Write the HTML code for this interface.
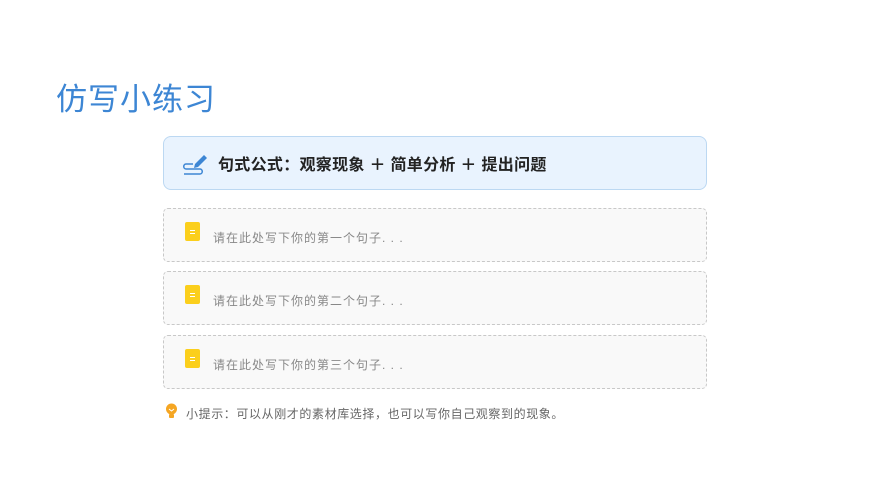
<!DOCTYPE html><html><head><meta charset="utf-8"><style>
body{margin:0;width:870px;height:489px;background:#fff;position:relative;font-family:"Liberation Sans","Noto Sans CJK SC",sans-serif;overflow:hidden}
.t{position:absolute;left:56px;top:74px;font-size:31px;color:#3d86d4;letter-spacing:1px}
.f{position:absolute;left:163px;top:136px;width:542px;height:52px;background:#e9f3fe;border:1px solid #bcd8f2;border-radius:8px}
.f span{position:absolute;left:54px;top:14px;font-size:16px;font-weight:bold;color:#222;letter-spacing:0.3px}
.b{position:absolute;left:163px;width:542px;height:52px;background:#f9f9f9;border:1px dashed #c8c8c8;border-radius:5px}
.b i{position:absolute;left:21px;top:13px;width:15px;height:19px;background:#fbcf1c;border-radius:2px}
.b i:before,.b i:after{content:"";position:absolute;left:5px;width:5px;height:1px;background:#fff;top:8px}
.b i:after{top:11px}
.b span{position:absolute;left:49px;top:20px;font-size:12px;color:#888;letter-spacing:1px}
.h{position:absolute;left:186px;top:405px;font-size:12px;color:#666;letter-spacing:0.6px}
</style></head><body>
<div class="t">仿写小练习</div>
<div class="f"><svg style="position:absolute;left:18px;top:13px" width="30" height="28" viewBox="0 0 30 28"><path d="M13 14 L22 5 L25 8 L16 17 L12 18 Z" fill="#3d86d4"/><path d="M11 14 H4 C1 14 1 19 4 19 H18 C21 19 21 24 18 24 H2" fill="none" stroke="#3d86d4" stroke-width="1.5"/></svg><span>句式公式：观察现象 ＋ 简单分析 ＋ 提出问题</span></div>
<div class="b" style="top:208px"><i></i><span>请在此处写下你的第一个句子. . .</span></div>
<div class="b" style="top:271px"><i></i><span>请在此处写下你的第二个句子. . .</span></div>
<div class="b" style="top:335px"><i></i><span>请在此处写下你的第三个句子. . .</span></div>
<svg style="position:absolute;left:165px;top:403px" width="13" height="16" viewBox="0 0 13 16"><circle cx="6.5" cy="6" r="5.5" fill="#f5a623"/><rect x="4" y="11" width="5" height="4" rx="1" fill="#f5a623"/><path d="M4 6 L6.5 8 L9 6" stroke="#fff" fill="none"/></svg>
<div class="h">小提示：可以从刚才的素材库选择，也可以写你自己观察到的现象。</div>
</body></html>
